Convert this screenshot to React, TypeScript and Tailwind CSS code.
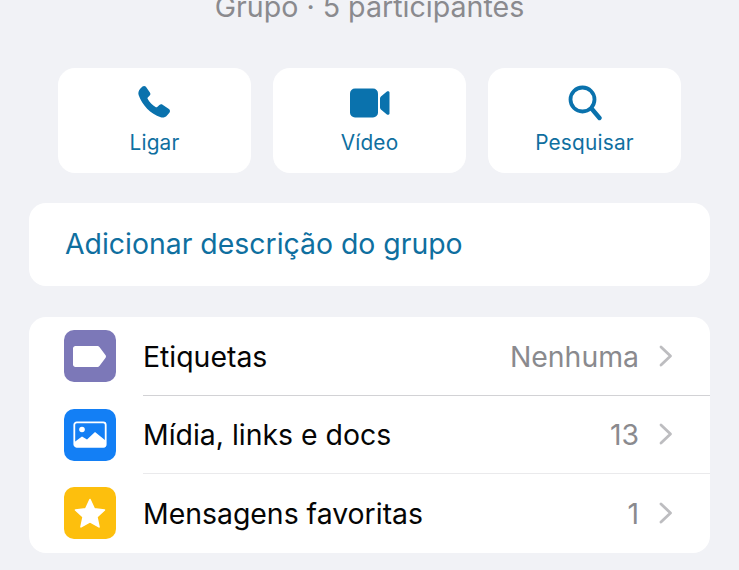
const F = { fontFamily: "Inter, 'Liberation Sans', sans-serif" };

function Phone() {
  return (
    <svg width="36" height="36" viewBox="0 0 36 36">
      <path fill="#0a72ad" d="M5.500 1.500c1-.9 2.600-.8 3.400.3l4 5.600c.7 1 .6 2.300-.2 3.200l-1.900 2c-.4.4-.4.800-.2 1.200 1.800 3.400 4.700 6.400 8.300 8.400.5.300.9.200 1.300-.2l2.200-2c.9-.8 2.200-.9 3.200-.2l6.300 4.200c1.200.9 1.500 2.600.5 3.700l-2.400 2.800c-1.600 1.800-4 2.500-6.300 1.800C13.600 29 5 20 1.700 10.300.9 8.100 1.500 5.500 3.200 3.700z" />
    </svg>
  );
}

function Video() {
  return (
    <svg width="40" height="30" viewBox="0 0 40 30">
      <rect x="0" y="0.500" width="28" height="29" rx="5" fill="#0a72ad" />
      <path fill="#0a72ad" d="M30 10.500c0-.8.300-1.500.9-2l6-5c.9-.8 2.600-.2 2.600 1v21c0 1.200-1.700 1.800-2.600 1l-6-5c-.6-.5-.9-1.200-.9-2z" />
    </svg>
  );
}

function Search() {
  return (
    <svg width="36" height="36" viewBox="0 0 36 36" fill="none" stroke="#0a72ad">
      <circle cx="15.500" cy="14.500" r="12" strokeWidth="3.800" />
      <path d="M24.500 23.500l8 9.500" strokeWidth="4.400" strokeLinecap="round" />
    </svg>
  );
}

function Tag() {
  return (
    <svg width="36" height="23" viewBox="0 0 36 23">
      <path fill="#fff" d="M3.500 1h21.500c1.100 0 2 .5 2.600 1.300l6 8c.5.700.5 1.700 0 2.400l-6 8c-.6.800-1.500 1.300-2.600 1.300H3.500C2.100 22 1 20.900 1 19.500v-16C1 2.100 2.100 1 3.500 1z" />
    </svg>
  );
}

function Picture() {
  return (
    <svg width="34" height="27" viewBox="0 0 34 27">
      <rect x="1.300" y="1.300" width="31.400" height="24.400" rx="2.500" fill="none" stroke="#fff" strokeWidth="1.800" />
      <circle cx="9" cy="8.500" r="2.800" fill="#fff" />
      <path fill="#fff" d="M1.500 21l7.500-5.500 5 3 8-7.500 10.500 8.500v5a2 2 0 0 1-2 2h-27a2 2 0 0 1-2-2z" />
    </svg>
  );
}

function Star() {
  return (
    <svg width="34" height="32" viewBox="0 0 34 32">
      <path fill="#fff" stroke="#fff" strokeWidth="1.600" strokeLinejoin="round" d="M17 2.500l4.300 9.300 10.200 1.200-7.600 6.900 2.100 10L17 24.900l-9 5 2.100-10-7.600-6.900 10.200-1.200z" />
    </svg>
  );
}

function Chevron() {
  return (
    <svg width="16" height="22" viewBox="0 0 16 22" fill="none" stroke="#bdbdc0" strokeWidth="2.800" strokeLinecap="round" strokeLinejoin="round">
      <path d="M3 2L12.500 11 3 20" />
    </svg>
  );
}

function Action({ label, icon }: { label: string; icon: React.ReactNode }) {
  return (
    <div className="flex h-[105px] w-[193px] flex-col items-center rounded-[17px] bg-white pt-[17px]">
      <div className="flex h-[36px] items-center justify-center">{icon}</div>
      <div className="mt-[8px] text-[20.800px] leading-[28px] tracking-[0.2px] text-[#0f6f9f]">{label}</div>
    </div>
  );
}

function Row({ icon, bg, label, value, last, line }: { icon: React.ReactNode; bg: string; label: string; value: string; last?: boolean; line?: string }) {
  return (
    <div className="flex h-[78.500px] items-center pl-[35px]">
      <div className={`flex h-[52px] w-[52px] shrink-0 items-center justify-center rounded-[10px] ${bg}`}>{icon}</div>
      <div className={`ml-[27px] flex h-full flex-1 items-center pr-[36px] ${last ? "" : `border-b ${line}`}`}>
        <span className="mt-[2px] flex-1 text-[28.400px] leading-none text-[#050505]">{label}</span>
        <span className="mt-[2px] text-[28.400px] leading-none text-[#8a8a8e]">{value}</span>
        <span className="ml-[19px] flex"><Chevron /></span>
      </div>
    </div>
  );
}

export default function App() {
  return (
    <div style={F} className="h-[570px] w-[739px] overflow-hidden bg-[#f1f2f6]">
      <div className="mt-[-10px] h-[34px] text-center text-[28.600px] leading-[34px] text-[#8a8a8e]">Grupo · 5 participantes</div>
      <div className="mt-[44px] flex justify-center gap-[22px]">
        <Action label="Ligar" icon={<Phone />} />
        <Action label="Vídeo" icon={<Video />} />
        <Action label="Pesquisar" icon={<Search />} />
      </div>
      <div className="mx-[29px] mt-[30px] flex h-[83px] items-center rounded-[17px] bg-white pl-[36px] text-[28.400px] text-[#0f6f9f]">
        Adicionar descrição do grupo
      </div>
      <div className="mx-[29px] mt-[31px] rounded-[17px] bg-white">
        <Row bg="bg-[#7c78b8]" icon={<Tag />} label="Etiquetas" value="Nenhuma" line="border-[#d2d2d5]" />
        <Row bg="bg-[#137ff5]" icon={<Picture />} label="Mídia, links e docs" value="13" line="border-[#eaeaec]" />
        <Row bg="bg-[#fdbf0d]" icon={<Star />} label="Mensagens favoritas" value="1" last />
      </div>
    </div>
  );
}
